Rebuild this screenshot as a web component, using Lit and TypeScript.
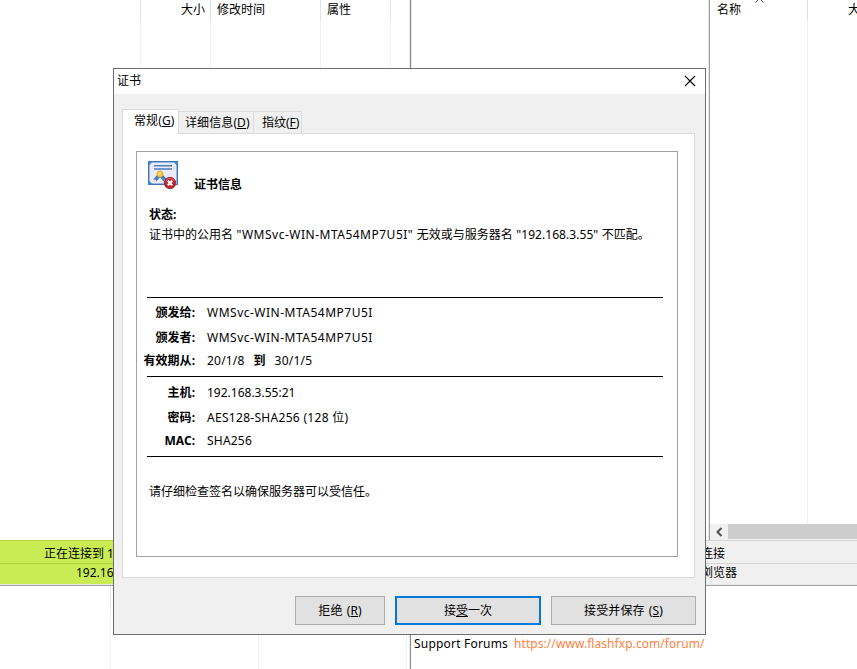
import { LitElement, html, css, svg } from "lit";
import { customElement } from "lit/decorators.js";

const sealIcon = svg`
  <rect x=".5" y=".5" width="29" height="23" fill="#ece9f8" stroke="#3f75b8"/>
  <rect x="1.500" y="1.500" width="27" height="21" fill="none" stroke="#8fbbe8"/>
  <path d="M1 1h3.500L1 4.500zM29 1h-3.500L29 4.500zM1 23h3.500L1 19.500z" fill="#4f8ace"/>
  <path d="M6 4.700h18M6 8h18" stroke="#4a80c4" stroke-width="1.400"/>
  <path d="M9.500 13.500L5 18.800l2.600-.2.800 1.900 3.800-4.500zM14.500 13.500l4.700 5-2.700.2-.9 1.800-3.600-4.500z" fill="#3f7fc8"/>
  <circle cx="12" cy="13" r="3.100" fill="#f6c93a" stroke="#d9a22a" stroke-width=".8"/>
  <circle cx="11.600" cy="12.500" r="1.200" fill="#fbe27a"/>
  <circle cx="22" cy="22" r="5.700" fill="#bd2a33" stroke="#96151f" stroke-width=".8"/>
  <path d="M18 19.500a5 5 0 0 1 8 0" fill="none" stroke="#da6a6c" stroke-width="1"/>
  <path d="M19.800 19.800l4.400 4.400M24.200 19.800l-4.400 4.400" stroke="#fff" stroke-width="2"/>`;

@customElement("app-root")
export class AppRoot extends LitElement {
  static styles = css`
    :host {
      display: block;
      position: relative;
      width: 857px;
      height: 669px;
      overflow: hidden;
      background: #fff;
      color: #000;
      font: 12px/16px "Noto Sans", "Noto Sans CJK SC", sans-serif;
      white-space: pre;
    }
    * { box-sizing: border-box; }
    svg { display: block; }
    u { text-underline-offset: 1px; text-decoration-thickness: 1px; text-decoration-skip-ink: none; }

    .desk { display: grid; grid-template-rows: 540px 44px 2px 83px; height: 669px; }
    .band { display: grid; grid-template-columns: 411px 297px 149px; min-height: 0; overflow: hidden; }
    .left { border-right: 1px solid #8c8c8c; display: flex; box-shadow: inset -1px 0 #ebebeb; }
    .middle { border-left: 1px solid #ebebeb; }
    .right { border-left: 1px solid #e6e6e6; display: flex; flex-direction: column; min-width: 0; }
    .inner { border-left: 1px solid #a0a0a0; flex: 1; display: flex; flex-direction: column; }
    .cols { display: flex; flex: 1; }
    .col {
      flex: none;
      padding: 2px 5px 0 6px;
      border-right: 1px solid;
      border-image: linear-gradient(#e2e2e2 22px, #e9f2fd 22px) 1;
      overflow: hidden;
    }
    .low .col.plain { border-image: linear-gradient(#e9f2fd, #e9f2fd) 1; }
    .c141 { width: 141px; }
    .c70 { width: 70px; text-align: right; }
    .c70.attr { text-align: left; padding-left: 6px; }
    .c110 { width: 110px; }
    .c98 { width: 98px; position: relative; padding-left: 7px; }
    .c111 { width: 111px; border-image: linear-gradient(#e2e2e2 24px, #e9f2fd 24px) 1; }
    .c148 { width: 148px; }
    .sort { position: absolute; left: 45px; top: -2px; }
    .cut { padding: 2px 0 0 40px; width: 49px; overflow: hidden; }
    .scroll { display: flex; height: 16px; background: #f0f0f0; }
    .scroll svg { width: 18px; height: 16px; }
    .thumb { flex: 1; background: #cdcdcd; height: 15px; }

    .status { display: grid; grid-template-columns: 411px 446px; background: #f0f0f0; }
    .busy { background: #c9ec54; border-top: 1px solid #b5d643; }
    .idle { border-top: 1px solid #d5d5d5; }
    .line { height: 23px; padding-top: 5px; border-bottom: 1px solid #b5d643; }
    .idle .line { border-color: #d5d5d5; padding-left: 290px; }
    .busy .line { padding-left: 44px; }
    .second { padding-top: 1px; }
    .busy .second { padding-left: 76px; }
    .idle .second { padding-left: 290px; }
    .rule { border-top: 1px solid #e9e9e9; border-bottom: 1px solid #a0a0a0; }
    .log { grid-column: span 2; padding: 50px 0 0 3px; letter-spacing: .2px; }
    .link { color: #ff7f40; margin-left: 6px; letter-spacing: .06px; }

    .dialog {
      position: absolute;
      left: 113px;
      top: 68px;
      width: 593px;
      height: 567px;
      border: 1px solid #6b6d70;
      background: #f0f0f0;
      display: flex;
      flex-direction: column;
    }
    .title { height: 25px; background: #fff; display: flex; justify-content: space-between; padding: 4px 9px 0 3px; }
    .title svg { margin-top: 2px; }
    .tabs { display: flex; align-items: flex-end; height: 40px; padding: 0 0 0 8px; flex: none; margin-bottom: -1px; z-index: 1; }
    .tab { height: 23px; border: 1px solid #dcdcdc; border-left: 0; padding: 3px 0 0 8px; }
    .tab.on { height: 25px; background: #fff; border-left: 1px solid #dcdcdc; border-bottom: 0; width: 57px; padding: 3px 0 0 11px; letter-spacing: .1px; }
    .tab.mid { width: 75px; padding-left: 6px; letter-spacing: .1px; }
    .tab.end { width: 48px; }
    .page { margin: 0 10px 0 8px; height: 445px; background: #fff; border: 1px solid #dcdcdc; padding: 17px 16px 20px 13px; flex: none; }
    .box { height: 406px; border: 1px solid #a0a0a0; padding: 9px 14px 0 10px; }
    .head { display: flex; height: 46px; font-weight: bold; padding-left: 1px; }
    .head span { padding: 16px 0 0 16px; }
    .head svg { width: 30px; height: 30px; }
    b { font-weight: bold; }
    .state { padding-left: 2px; height: 20px; }
    .msg { padding-left: 2px; height: 70px; word-spacing: .4px; }
    .info { border-top: 1px solid #000; }
    .first { height: 79px; }
    .last { height: 81px; padding-top: 1px; border-bottom: 1px solid #000; margin-bottom: 27px; }
    .row { display: grid; grid-template-columns: 58px 1fr; column-gap: 12px; margin-left: -10px; height: 25px; padding-top: 7px; }
    .row b { justify-self: end; }
    .row:last-child { padding-top: 5px; }
    .wide { letter-spacing: .5px; }
    .cipher { letter-spacing: .3px; }
    .loose { letter-spacing: .2px; }
    .tight { letter-spacing: .06px; }
    .row .to { margin: 0 9px; letter-spacing: 0; }
    .buttons { display: flex; gap: 10px; padding: 18px 9px 0 0; justify-content: flex-end; }
    .btn { height: 29px; border: 1px solid #adadad; background: #e1e1e1; display: flex; align-items: center; justify-content: center; letter-spacing: .1px; word-spacing: 1px; }
    .w90 { width: 90px; }
    .w146 { width: 146px; border: 2px solid #0078d7; letter-spacing: 0; }
    .w145 { width: 145px; }
  `;

  private field(label: string, value: unknown, spacing = "") {
    return html`<div class="row"><b>${label}:</b><span class=${spacing}>${value}</span></div>`;
  }

  render() {
    return html`<div class="desk"
      ><div class="band"
        ><div class="left"
          ><div class="col c141"></div><div class="col c70">大小</div><div class="col c110">修改时间</div><div class="col c70 attr">属性</div></div
        ><div class="middle"></div
        ><div class="right"><div class="inner"
          ><div class="cols"><div class="col c98">名称<svg class="sort" width="9" height="5"><path d="M0.500 4.500l4-4 4 4" fill="none" stroke="#555" /></svg></div><div class="cut">大小</div></div
          ><div class="scroll"><svg><path d="M11.500 4l-4 4 4 4" fill="none" stroke="#505050" stroke-width="2" /></svg><div class="thumb"></div></div
        ></div></div
      ></div
      ><div class="status"
        ><div class="busy"><div class="line">正在连接到 192.168.3.55</div><div class="second">192.168.3.55</div></div
        ><div class="idle"><div class="line">连接</div><div class="second">浏览器</div></div
      ></div
      ><div class="rule"></div
      ><div class="band low"
        ><div class="left"><div class="col c111"></div><div class="col c148 plain"></div><div class="col c148 plain"></div></div
        ><div class="log">Support Forums<span class="link">https://www.flashfxp.com/forum/</span></div
      ></div
    ></div
    ><div class="dialog"
      ><div class="title"><span>证书</span><svg width="12" height="12"><path d="M1 1l10 10M11 1L1 11" stroke="#000" stroke-width="1.100" /></svg></div
      ><div class="tabs"><div class="tab on">常规(<u>G</u>)</div><div class="tab mid">详细信息(<u>D</u>)</div><div class="tab end">指纹(<u>F</u>)</div></div
      ><div class="page"><div class="box"
        ><div class="head"><svg viewBox="0 0 30 30">${sealIcon}</svg><span>证书信息</span></div
        ><div class="state"><b>状态:</b></div
        ><div class="msg">证书中的公用名 <span class="wide">"WMSvc-WIN-MTA54MP7U5I"</span> 无效或与服务器名 <span class="tight">"192.168.3.55"</span> 不匹配。</div
        ><div class="info first">${this.field("颁发给", "WMSvc-WIN-MTA54MP7U5I", "wide")}${this.field("颁发者", "WMSvc-WIN-MTA54MP7U5I", "wide")}${this.field("有效期从", html`20/1/8<b class="to">到</b>30/1/5`, "loose")}</div
        ><div class="info last">${this.field("主机", "192.168.3.55:21")}${this.field("密码", "AES128-SHA256 (128 位)", "cipher")}${this.field("MAC", "SHA256", "loose")}</div
        ><div class="state">请仔细检查签名以确保服务器可以受信任。</div
      ></div></div
      ><div class="buttons"><div class="btn w90">拒绝 (<u>R</u>)</div><div class="btn w146">接<u>受</u>一次</div><div class="btn w145">接受并保存 (<u>S</u>)</div></div
    ></div>`;
  }
}
